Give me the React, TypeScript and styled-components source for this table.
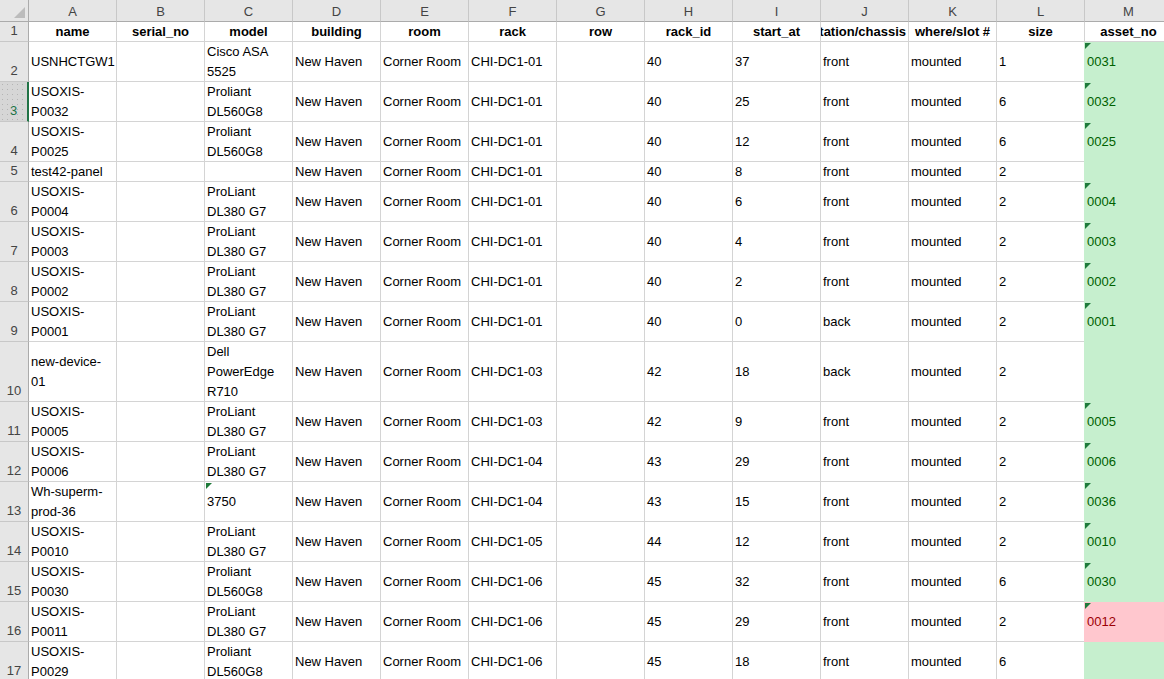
import React from "react";
import styled, { createGlobalStyle, css } from "styled-components";

const GlobalStyle = createGlobalStyle`
  html, body { margin: 0; padding: 0; background: #ffffff; overflow: hidden; }
  body { font-family: "Liberation Sans", Arial, sans-serif; font-size: 13px; color: #000; }
`;

const COLS = "29px repeat(13, 88px)";

const Sheet = styled.div`
  display: flex;
  flex-direction: column;
  width: 1164px;
  height: 679px;
  overflow: hidden;
`;

const Row = styled.div<{ $h: number }>`
  display: grid;
  grid-template-columns: ${COLS};
  height: ${(p) => p.$h}px;
  flex: 0 0 auto;
`;

const Corner = styled.div`
  position: relative;
  background: #e6e6e6;
  border-right: 1px solid #ababab;
  border-bottom: 1px solid #ababab;
  &::after {
    content: "";
    position: absolute;
    right: 3px;
    bottom: 3px;
    width: 0;
    height: 0;
    border-left: 11px solid transparent;
    border-bottom: 11px solid #bcbcbc;
  }
`;

const ColHeader = styled.div`
  background: #e6e6e6;
  border-right: 1px solid #c8c8c8;
  border-bottom: 1px solid #ababab;
  color: #444;
  display: flex;
  align-items: center;
  justify-content: center;
  padding-top: 1px;
`;

const RowHeader = styled.div<{ $active?: boolean }>`
  background: #e6e6e6;
  border-right: 1px solid #ababab;
  border-bottom: 1px solid #c8c8c8;
  color: #444;
  display: flex;
  align-items: flex-end;
  justify-content: center;
  padding-bottom: 1px;
  line-height: 18px;
  ${(p) =>
    p.$active &&
    css`
      background-color: #d6d6d6;
      background-image: radial-gradient(#b4b4b4 0.8px, transparent 0.9px);
      background-size: 5px 5px;
      border-right: 2px solid #217346;
      color: #217346;
    `}
`;

type Fill = "green" | "red" | undefined;
type Align = "left" | "center" | "right";

const justify = { left: "flex-start", center: "center", right: "flex-end" };

const Cell = styled.div<{ $bold?: boolean; $align?: Align; $fill?: Fill; $flag?: boolean; $head?: boolean }>`
  position: relative;
  border-right: 1px solid #d4d4d4;
  border-bottom: 1px solid #d4d4d4;
  display: flex;
  align-items: center;
  justify-content: ${(p) => justify[p.$align ?? "left"]};
  padding: ${(p) => (p.$head ? "0 2px" : "1px 2px 0")};
  white-space: pre;
  overflow: hidden;
  line-height: 20px;
  font-weight: ${(p) => (p.$bold ? 700 : 400)};
  ${(p) =>
    p.$fill === "green" &&
    css`
      background: #c6efce;
      color: #006100;
      border-color: #c6efce;
      margin-left: -1px;
      padding-left: 3px;
    `}
  ${(p) =>
    p.$fill === "red" &&
    css`
      background: #ffc7ce;
      color: #9c0006;
      border-color: #ffc7ce;
      margin-left: -1px;
      padding-left: 3px;
    `}
  ${(p) =>
    p.$flag &&
    css`
      &::before {
        content: "";
        position: absolute;
        left: 1px;
        top: 1px;
        width: 0;
        height: 0;
        border-top: 6px solid #1e7a3a;
        border-right: 6px solid transparent;
      }
    `}
`;

const letters = ["A", "B", "C", "D", "E", "F", "G", "H", "I", "J", "K", "L", "M"];
const headers = [
  "name",
  "serial_no",
  "model",
  "building",
  "room",
  "rack",
  "row",
  "rack_id",
  "start_at",
  "orientation/chassis",
  "where/slot #",
  "size",
  "asset_no",
];

type DataRow = {
  h: number;
  name: string;
  model: string;
  rack: string;
  rackId: string;
  start: string;
  orient: string;
  size: string;
  asset: string;
  red?: boolean;
  modelFlag?: boolean;
};

const PL560 = "Proliant\nDL560G8";
const PL380 = "ProLiant\nDL380 G7";

const data: DataRow[] = [
  { h: 40, name: "USNHCTGW1", model: "Cisco ASA\n5525", rack: "CHI-DC1-01", rackId: "40", start: "37", orient: "front", size: "1", asset: "0031" },
  { h: 40, name: "USOXIS-\nP0032", model: PL560, rack: "CHI-DC1-01", rackId: "40", start: "25", orient: "front", size: "6", asset: "0032" },
  { h: 40, name: "USOXIS-\nP0025", model: PL560, rack: "CHI-DC1-01", rackId: "40", start: "12", orient: "front", size: "6", asset: "0025" },
  { h: 20, name: "test42-panel", model: "", rack: "CHI-DC1-01", rackId: "40", start: "8", orient: "front", size: "2", asset: "" },
  { h: 40, name: "USOXIS-\nP0004", model: PL380, rack: "CHI-DC1-01", rackId: "40", start: "6", orient: "front", size: "2", asset: "0004" },
  { h: 40, name: "USOXIS-\nP0003", model: PL380, rack: "CHI-DC1-01", rackId: "40", start: "4", orient: "front", size: "2", asset: "0003" },
  { h: 40, name: "USOXIS-\nP0002", model: PL380, rack: "CHI-DC1-01", rackId: "40", start: "2", orient: "front", size: "2", asset: "0002" },
  { h: 40, name: "USOXIS-\nP0001", model: PL380, rack: "CHI-DC1-01", rackId: "40", start: "0", orient: "back", size: "2", asset: "0001" },
  { h: 60, name: "new-device-\n01", model: "Dell\nPowerEdge\nR710", rack: "CHI-DC1-03", rackId: "42", start: "18", orient: "back", size: "2", asset: "" },
  { h: 40, name: "USOXIS-\nP0005", model: PL380, rack: "CHI-DC1-03", rackId: "42", start: "9", orient: "front", size: "2", asset: "0005" },
  { h: 40, name: "USOXIS-\nP0006", model: PL380, rack: "CHI-DC1-04", rackId: "43", start: "29", orient: "front", size: "2", asset: "0006" },
  { h: 40, name: "Wh-superm-\nprod-36", model: "3750", modelFlag: true, rack: "CHI-DC1-04", rackId: "43", start: "15", orient: "front", size: "2", asset: "0036" },
  { h: 40, name: "USOXIS-\nP0010", model: PL380, rack: "CHI-DC1-05", rackId: "44", start: "12", orient: "front", size: "2", asset: "0010" },
  { h: 40, name: "USOXIS-\nP0030", model: PL560, rack: "CHI-DC1-06", rackId: "45", start: "32", orient: "front", size: "6", asset: "0030" },
  { h: 40, name: "USOXIS-\nP0011", model: PL380, rack: "CHI-DC1-06", rackId: "45", start: "29", orient: "front", size: "2", asset: "0012", red: true },
  { h: 40, name: "USOXIS-\nP0029", model: PL560, rack: "CHI-DC1-06", rackId: "45", start: "18", orient: "front", size: "6", asset: "" },
];

export default function App() {
  return (
    <>
      <GlobalStyle />
      <Sheet>
        <Row $h={22}>
          <Corner />
          {letters.map((l) => (
            <ColHeader key={l}>{l}</ColHeader>
          ))}
        </Row>
        <Row $h={20}>
          <RowHeader>1</RowHeader>
          {headers.map((h) => (
            <Cell key={h} $head $bold $align={h === "orientation/chassis" ? "right" : "center"}>
              {h}
            </Cell>
          ))}
        </Row>
        {data.map((r, i) => {
          const n = i + 2;
          return (
            <Row key={n} $h={r.h}>
              <RowHeader $active={n === 3}>{n}</RowHeader>
              <Cell>{r.name}</Cell>
              <Cell />
              <Cell $flag={r.modelFlag}>{r.model}</Cell>
              <Cell>New Haven</Cell>
              <Cell>Corner Room</Cell>
              <Cell>{r.rack}</Cell>
              <Cell />
              <Cell>{r.rackId}</Cell>
              <Cell>{r.start}</Cell>
              <Cell>{r.orient}</Cell>
              <Cell>mounted</Cell>
              <Cell>{r.size}</Cell>
              <Cell $fill={r.red ? "red" : "green"} $flag={r.asset !== ""}>
                {r.asset}
              </Cell>
            </Row>
          );
        })}
      </Sheet>
    </>
  );
}
